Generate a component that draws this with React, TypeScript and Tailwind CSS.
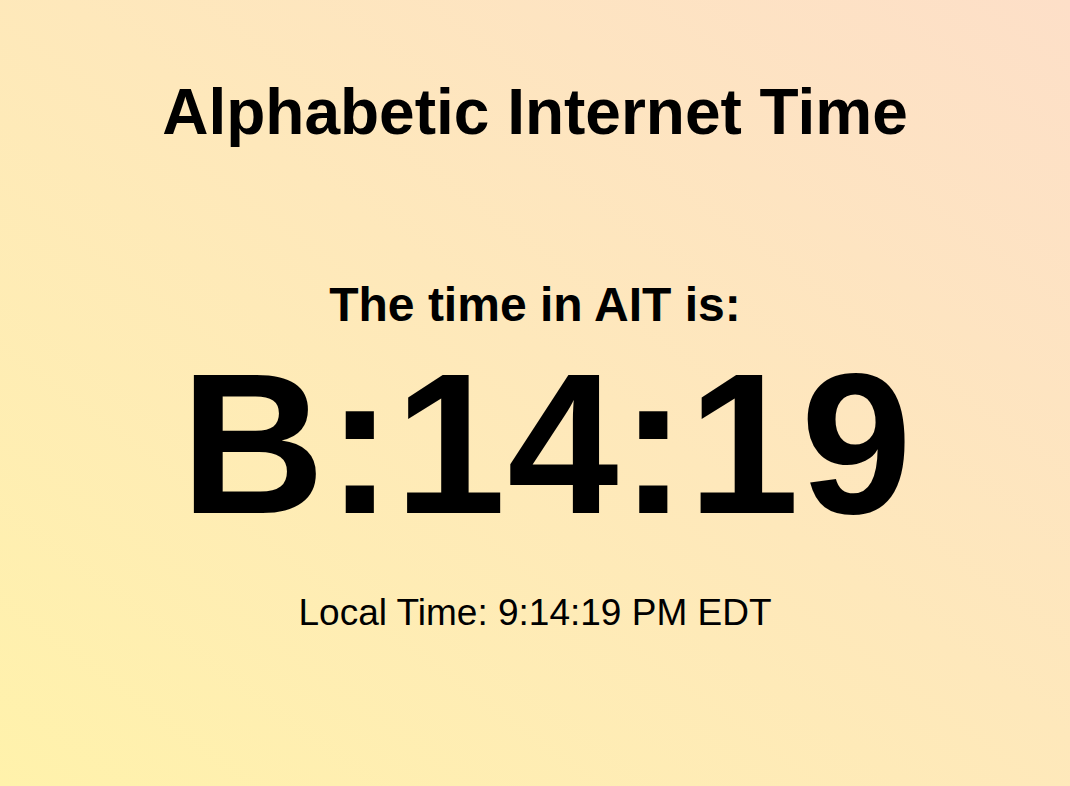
export default function App() {
  return (
    <div className="min-h-[786px] w-full bg-linear-to-tr from-[#fff2ab] to-[#fddfc8] flex flex-col items-center pt-[80px] text-black font-['Liberation_Sans',Arial,sans-serif]">
      <h1 className="text-[64px] leading-[64px] font-bold">Alphabetic Internet Time</h1>
      <h2 className="mt-[137px] text-[48px] leading-[48px] font-bold">The time in AIT is:</h2>
      <div className="mt-[15px] ml-[24px] text-[200px] leading-[200px] font-bold tracking-[1.5px]">B:14:19</div>
      <p className="mt-[50px] text-[37px] leading-[37px]">Local Time: 9:14:19 PM EDT</p>
    </div>
  )
}
